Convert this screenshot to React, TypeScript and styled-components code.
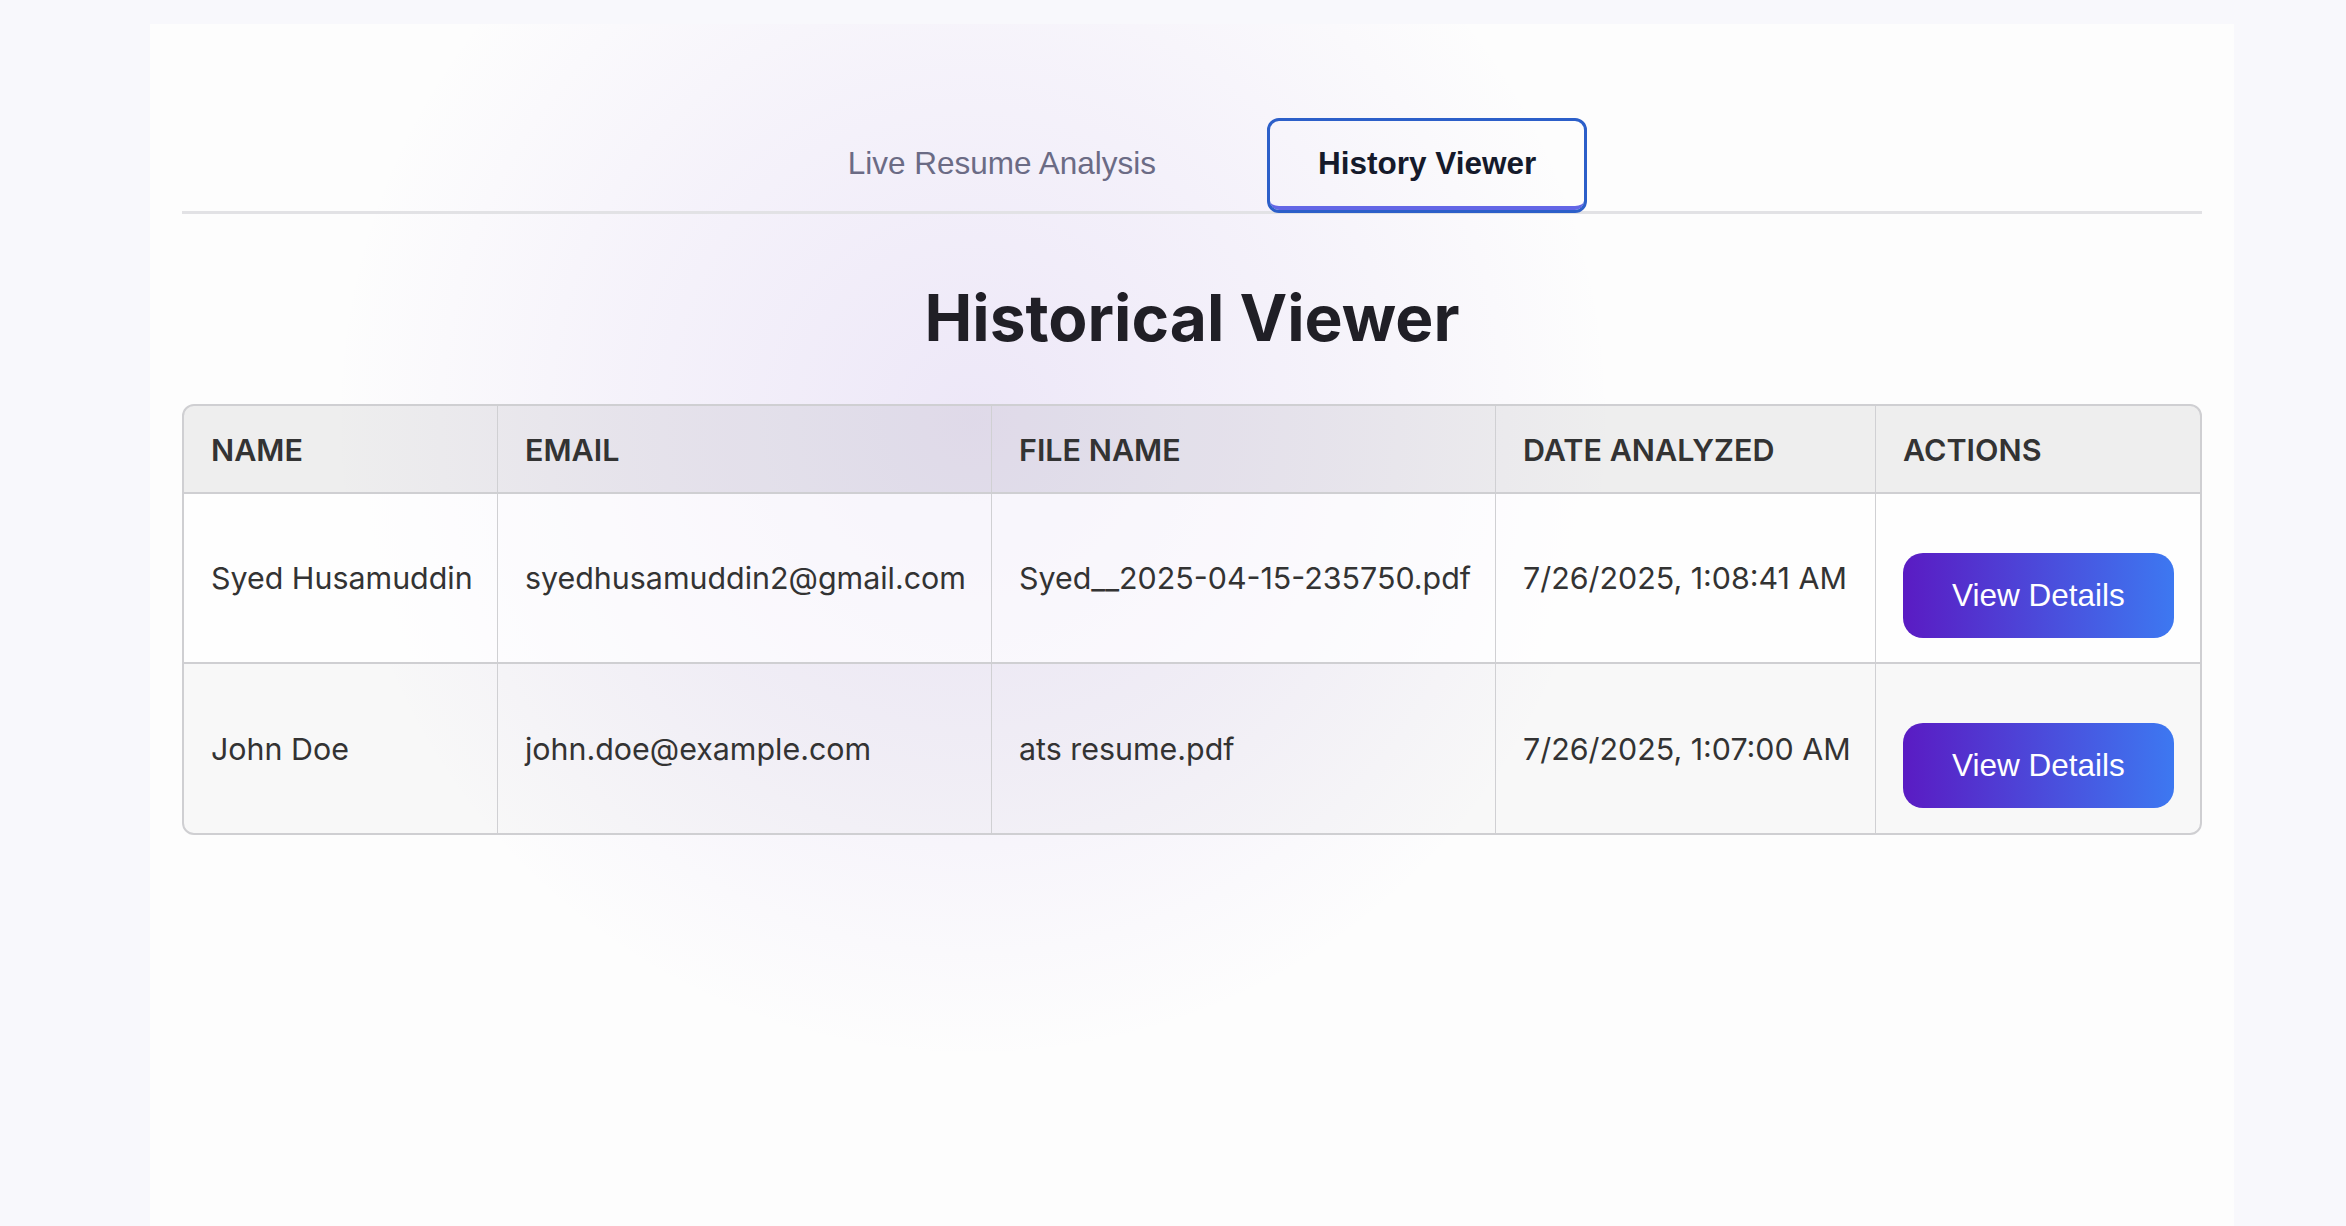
import React from 'react';
import styled, { createGlobalStyle } from 'styled-components';

const GlobalStyle = createGlobalStyle`
  html, body { margin: 0; padding: 0; }
  body {
    background: #f8f8fc;
    font-family: Inter, "Noto Sans", sans-serif;
  }
`;

const Page = styled.div`
  box-sizing: border-box;
  min-height: 100vh;
  padding: 24px 112px 0 150px;
`;

const Panel = styled.main`
  box-sizing: border-box;
  min-height: 1202px;
  padding: 97px 32px 0;
  background:
    radial-gradient(
      circle 640px at 823px 396px,
      rgba(140, 100, 215, 0.14) 0%,
      rgba(140, 100, 215, 0.07) 55%,
      rgba(140, 100, 215, 0) 100%
    ),
    #fdfdfd;
`;

const TabBar = styled.nav`
  display: flex;
  justify-content: center;
  gap: 66px;
  padding-bottom: 1px;
  border-bottom: 3px solid #e2e2e5;
`;

const Tab = styled.button<{ $active?: boolean }>`
  box-sizing: border-box;
  height: 89px;
  padding: 0 48px;
  background: transparent;
  border: none;
  border-bottom: 4px solid ${(p) => (p.$active ? '#6366e6' : 'transparent')};
  border-radius: 9px;
  outline: ${(p) => (p.$active ? '3px solid #2c5fc9' : 'none')};
  font-family: "Liberation Sans", Arial, sans-serif;
  font-size: 31.5px;
  font-weight: ${(p) => (p.$active ? 700 : 400)};
  color: ${(p) => (p.$active ? '#151a2b' : '#6b6b85')};
  cursor: pointer;
`;

const Title = styled.h1`
  margin: 65px 0 48px;
  text-align: center;
  font-family: Inter, sans-serif;
  font-weight: 700;
  font-size: 64px;
  line-height: 77px;
  color: #201f26;
`;

const Table = styled.table`
  width: 100%;
  table-layout: fixed;
  border-collapse: separate;
  border-spacing: 0;
  border: 2px solid #cfcfd2;
  border-radius: 12px;
  overflow: hidden;
`;

const Col = styled.col<{ $w: number }>`
  width: ${(p) => p.$w}px;
`;

const HeadCell = styled.th`
  box-sizing: border-box;
  height: 88px;
  padding: 0 27px;
  text-align: left;
  background: rgba(0, 0, 0, 0.06);
  border-bottom: 2px solid #cfcfd2;
  border-right: 1px solid #d0d0d3;
  font-family: Inter, sans-serif;
  font-weight: 600;
  font-size: 30.5px;
  color: #333;
  text-transform: uppercase;
  &:last-child { border-right: none; }
`;

const Row = styled.tr<{ $alt?: boolean }>`
  background: ${(p) => (p.$alt ? 'rgba(0, 0, 0, 0.018)' : 'rgba(255, 255, 255, 0.55)')};
  &:last-child td { border-bottom: none; height: 169px; }
`;

const Cell = styled.td`
  box-sizing: border-box;
  height: 170px;
  padding: 0 27px;
  vertical-align: middle;
  border-bottom: 2px solid #cfcfd2;
  border-right: 1px solid #d0d0d3;
  font-family: Inter, sans-serif;
  font-size: 30.4px;
  color: #333;
  white-space: nowrap;
  &:last-child { border-right: none; }
`;

const ActionCell = styled(Cell)`
  vertical-align: top;
  padding-top: 59px;
`;

const DetailsButton = styled.button`
  height: 85px;
  padding: 0 49px;
  border: none;
  border-radius: 20px;
  background: linear-gradient(90deg, #5a1bc3 0%, #3d78f1 100%);
  color: #fff;
  font-family: "Liberation Sans", Arial, sans-serif;
  font-size: 31.5px;
  cursor: pointer;
`;

const records = [
  {
    name: 'Syed Husamuddin',
    email: 'syedhusamuddin2@gmail.com',
    file: 'Syed__2025-04-15-235750.pdf',
    date: '7/26/2025, 1:08:41 AM',
  },
  {
    name: 'John Doe',
    email: 'john.doe@example.com',
    file: 'ats resume.pdf',
    date: '7/26/2025, 1:07:00 AM',
  },
];

const columns = [
  { label: 'Name', w: 314 },
  { label: 'Email', w: 494 },
  { label: 'File Name', w: 504 },
  { label: 'Date Analyzed', w: 380 },
  { label: 'Actions', w: 324 },
];

export default function App() {
  return (
    <>
      <GlobalStyle />
      <Page>
        <Panel>
          <TabBar>
            <Tab>Live Resume Analysis</Tab>
            <Tab $active>History Viewer</Tab>
          </TabBar>
          <Title>Historical Viewer</Title>
          <Table>
            <colgroup>
              {columns.map((c) => (
                <Col key={c.label} $w={c.w} />
              ))}
            </colgroup>
            <thead>
              <tr>
                {columns.map((c) => (
                  <HeadCell key={c.label}>{c.label}</HeadCell>
                ))}
              </tr>
            </thead>
            <tbody>
              {records.map((r, i) => (
                <Row key={r.email} $alt={i % 2 === 1}>
                  <Cell>{r.name}</Cell>
                  <Cell>{r.email}</Cell>
                  <Cell>{r.file}</Cell>
                  <Cell>{r.date}</Cell>
                  <ActionCell>
                    <DetailsButton>View Details</DetailsButton>
                  </ActionCell>
                </Row>
              ))}
            </tbody>
          </Table>
        </Panel>
      </Page>
    </>
  );
}
